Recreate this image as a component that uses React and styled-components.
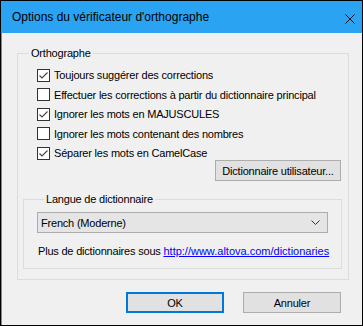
import styled, { createGlobalStyle } from "styled-components";

const GlobalStyle = createGlobalStyle`
  html, body {
    margin: 0;
    padding: 0;
    background: #fff;
  }
  * {
    box-sizing: border-box;
  }
`;

const Window = styled.div`
  width: 363px;
  height: 326px;
  display: flex;
  flex-direction: column;
  border: 1px solid #000;
  font-family: "Liberation Sans", Arial, sans-serif;
  font-size: 11px;
  color: #000;
`;

const TitleBar = styled.div`
  height: 32px;
  background: #2aa3f2;
  display: flex;
  align-items: center;
  justify-content: space-between;
  padding: 0 6px 0 11px;
  font-size: 12px;
`;

const CloseIcon = styled.svg`
  width: 10px;
  height: 10px;
  margin-right: 1px;
  margin-top: 4px;
`;

const Body = styled.div`
  flex: 1;
  background: #f0f0f0;
  border-left: 1px solid #2aa3f2;
  padding: 14px 13px 0 15px;
  display: flex;
  flex-direction: column;
  letter-spacing: -0.2px;
`;

const Group = styled.fieldset`
  margin: 0;
  border: 1px solid #dcdcdc;
  padding: ${(p) => p.$pad};
  min-width: 0;
  display: flex;
  flex-direction: column;
`;

const InnerGroup = styled(Group)`
  margin-top: 12px;
`;

const Legend = styled.legend`
  padding: 0 2px;
  margin-left: ${(p) => p.$offset}px;
  line-height: 13px;
`;

const Options = styled.div`
  display: flex;
  flex-direction: column;
  gap: 3.5px;
  padding: 7px 0 0 14px;
`;

const Row = styled.label`
  display: flex;
  align-items: center;
  gap: 4px;
  height: 16px;
`;

const Box = styled.span`
  width: 13px;
  height: 13px;
  border: 1px solid #333;
  background: #fff;
  display: flex;
  align-items: center;
  justify-content: center;
`;

const Button = styled.button`
  font: inherit;
  letter-spacing: inherit;
  color: #000;
  height: 21px;
  width: ${(p) => p.$w}px;
  background: #e1e1e1;
  border: ${(p) => (p.$default ? "2px solid #0078d7" : "1px solid #adadad")};
  padding: 0;
  margin: 0;
`;

const UserDictButton = styled(Button)`
  align-self: flex-end;
  margin: -1px 1px 0 0;
`;

const Select = styled.div`
  height: 21px;
  background: #e5e5e5;
  border: 1px solid #acacac;
  display: flex;
  align-items: center;
  justify-content: space-between;
  padding: 0 7px 0 3px;
`;

const Info = styled.div`
  margin-top: 12px;
  padding-left: 1px;
  white-space: nowrap;
`;

const Link = styled.a`
  color: #0000ff;
  text-decoration: underline;
  letter-spacing: 0;
`;

const Footer = styled.div`
  display: flex;
  justify-content: flex-end;
  gap: 19px;
  padding: 12px 8px 0 0;
`;

const Check = ({ checked, children }) => (
  <Row>
    <Box>
      {checked && (
        <svg width="11" height="11" viewBox="0 0 11 11">
          <path d="M1.5 5.5 L4 8 L9.5 2.5" fill="none" stroke="#444" strokeWidth="1.1" />
        </svg>
      )}
    </Box>
    {children}
  </Row>
);

const options = [
  { label: "Toujours suggérer des corrections", checked: true },
  { label: "Effectuer les corrections à partir du dictionnaire principal", checked: false },
  { label: "Ignorer les mots en MAJUSCULES", checked: true },
  { label: "Ignorer les mots contenant des nombres", checked: false },
  { label: "Séparer les mots en CamelCase", checked: true },
];

export default function App() {
  return (
    <>
      <GlobalStyle />
      <Window>
        <TitleBar>
          <span>Options du vérificateur d'orthographe</span>
          <CloseIcon viewBox="0 0 10 10">
            <path d="M0.5 0.5 L9.5 9.5 M9.5 0.5 L0.5 9.5" stroke="#000" strokeWidth="1" />
          </CloseIcon>
        </TitleBar>
        <Body>
          <Group $pad="0 6px 10px 5px">
            <Legend $offset={6}>Orthographe</Legend>
            <Options>
              {options.map((o) => (
                <Check key={o.label} checked={o.checked}>
                  {o.label}
                </Check>
              ))}
            </Options>
            <UserDictButton $w={126}>Dictionnaire utilisateur...</UserDictButton>
            <InnerGroup $pad="6px 13px 11px 13px">
              <Legend $offset={7}>Langue de dictionnaire</Legend>
              <Select>
                <span>French (Moderne)</span>
                <svg width="9" height="5" viewBox="0 0 9 5">
                  <path d="M0.5 0.5 L4.5 4.5 L8.5 0.5" fill="none" stroke="#333" strokeWidth="1" />
                </svg>
              </Select>
              <Info>
                Plus de dictionnaires sous{" "}
                <Link href="#">http://www.altova.com/dictionaries</Link>
              </Info>
            </InnerGroup>
          </Group>
          <Footer>
            <Button $w={98} $default>
              OK
            </Button>
            <Button $w={98}>Annuler</Button>
          </Footer>
        </Body>
      </Window>
    </>
  );
}
